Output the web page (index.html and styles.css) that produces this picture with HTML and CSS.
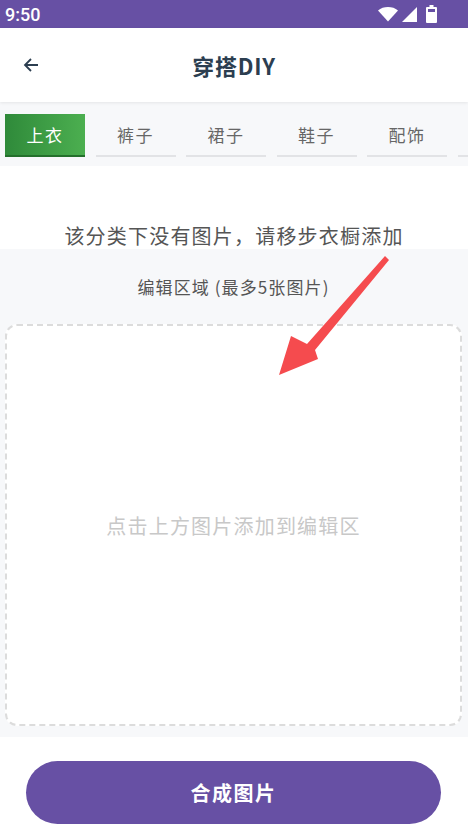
FILE: index.html
```html
<!DOCTYPE html>
<html lang="zh-CN">
<head>
    <meta charset="UTF-8">
    <meta name="viewport" content="width=device-width, initial-scale=1.0">
    <title>穿搭DIY</title>
    <link rel="stylesheet" href="styles.css">
</head>
<body>
    <div class="statusbar">
        <span class="time">9:50</span>
        <div class="status-icons">
            <svg width="20" height="16" viewBox="0 0 20 16"><path d="M0 4.5C2.8 2 6.2 1 10 1s7.2 1 10 3.5L10 15.5z" fill="white"/></svg>
            <svg width="16" height="16" viewBox="0 0 16 16"><path d="M16 1v15H1z" fill="white"/></svg>
            <svg width="11" height="18" viewBox="0 0 11 18" class="battery"><path d="M3.5 0h4v2h2.5a1 1 0 0 1 1 1v14a1 1 0 0 1-1 1H1a1 1 0 0 1-1-1V3a1 1 0 0 1 1-1h2.5z" fill="white"/><rect x="2" y="4" width="7" height="3" fill="#6750a4"/></svg>
        </div>
    </div>

    <div class="appbar">
        <a class="back" href="#">
            <svg width="16" height="16" viewBox="0 0 16 16"><path d="M15 8H2M8 2L2 8l6 6" stroke="#2c3e50" stroke-width="1.8" fill="none"/></svg>
        </a>
        <h1>穿搭DIY</h1>
    </div>

    <div class="tabs">
        <div class="tab active">上衣</div>
        <div class="tab">裤子</div>
        <div class="tab">裙子</div>
        <div class="tab">鞋子</div>
        <div class="tab">配饰</div>
        <div class="tab"></div>
    </div>

    <div class="empty">
        <p>该分类下没有图片，请移步衣橱添加</p>
    </div>

    <div class="editor">
        <p class="label">编辑区域 (最多5张图片)</p>
        <div class="canvas">
            <p>点击上方图片添加到编辑区</p>
        </div>
    </div>

    <div class="actions">
        <button class="compose">合成图片</button>
    </div>

    <!-- annotation arrow drawn over the screenshot -->
    <svg class="pointer" width="468" height="840" viewBox="0 0 468 840">
        <polygon points="385,256 389,260 315,350 318,359 279,375 291,336 307,344" fill="#f54b4e"/>
    </svg>
</body>
</html>
```

FILE: styles.css
```css
body {
    margin: 0;
    width: 468px;
    height: 840px;
    overflow: hidden;
    font-family: "Noto Sans CJK SC", "Noto Sans", sans-serif;
    background-color: #fff;
    position: relative;
}

p {
    margin: 0;
}

.statusbar {
    height: 28px;
    background-color: #6750a4;
    display: flex;
    align-items: center;
    justify-content: space-between;
    padding: 0 31px 0 5px;
}

.time {
    font-family: Roboto, sans-serif;
    font-size: 18px;
    color: white;
    font-weight: 500;
}

.status-icons {
    display: flex;
    align-items: center;
    gap: 3px;
}

.status-icons .battery {
    margin-left: 6px;
}

.appbar {
    height: 74px;
    display: flex;
    align-items: center;
    justify-content: center;
    position: relative;
    box-shadow: 0 1px 3px rgba(0, 0, 0, 0.08);
    z-index: 1;
}

.back {
    position: absolute;
    left: 23px;
    top: 29px;
    display: flex;
}

.appbar h1 {
    margin: 0;
    font-size: 22px;
    font-weight: bold;
    color: #2c3e50;
    letter-spacing: 0.8px;
}

.tabs {
    background-color: #f7f8fa;
    display: flex;
    gap: 10.5px;
    padding: 12px 0 9px 5px;
    overflow: hidden;
}

.tab {
    flex: 0 0 80px;
    height: 41px;
    border-bottom: 2px solid #e2e3e6;
    display: flex;
    align-items: center;
    justify-content: center;
    font-size: 17px;
    letter-spacing: 1.5px;
    color: #666;
}

.tab.active {
    background: linear-gradient(90deg, #2f8a3a, #4caf50);
    border-bottom-color: #24702c;
    color: white;
}

.empty {
    height: 83px;
    display: flex;
    align-items: flex-end;
    justify-content: center;
}

.empty p {
    font-size: 20px;
    letter-spacing: 1.2px;
    color: #555;
    line-height: 26px;
}

.editor {
    background-color: #f7f8fa;
    height: 488px;
    padding: 0 6px 0 5px;
}

.label {
    text-align: center;
    font-size: 17px;
    letter-spacing: 1.1px;
    color: #555;
    line-height: 22px;
    padding: 27px 0 26px;
}

.canvas {
    height: 398px;
    background-color: #fff;
    border: 2px dashed #dcdcdc;
    border-radius: 12px;
    display: flex;
    align-items: center;
    justify-content: center;
}

.canvas p {
    font-size: 20px;
    letter-spacing: 1.2px;
    color: #c8c8c8;
}

.actions {
    padding: 24px 27px 0 26px;
}

.compose {
    width: 100%;
    height: 63px;
    border: none;
    border-radius: 32px;
    background-color: #6750a4;
    color: white;
    font-family: inherit;
    font-size: 20px;
    letter-spacing: 1.5px;
    font-weight: bold;
}

.pointer {
    position: absolute;
    left: 0;
    top: 0;
    pointer-events: none;
}
```
